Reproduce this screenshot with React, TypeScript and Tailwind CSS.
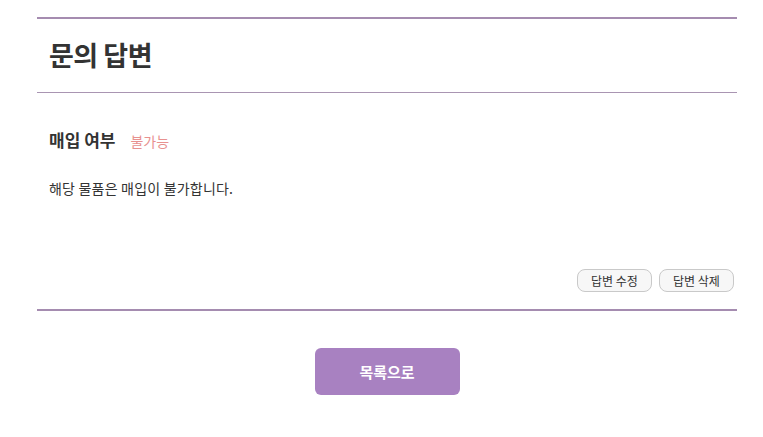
import React from "react";

export default function App() {
  return (
    <div
      className="w-[763px] h-[437px] bg-white pt-[17px]"
      style={{ fontFamily: '"Noto Sans CJK KR", "Noto Sans", sans-serif' }}
    >
      <div className="ml-[37px] w-[700px]">
        <div className="border-t-2 border-[#a58cb0] border-b border-b-[#a995b2] h-[76px] flex items-center px-[12px] pb-[3px]">
          <h1 className="text-[27px] font-bold text-[#333] leading-none tracking-[-0.5px]">문의 답변</h1>
        </div>
        <div className="px-[12px] pt-[38px]">
          <div className="flex items-baseline">
            <span className="text-[17px] font-bold text-[#333] leading-none">매입 여부</span>
            <span className="ml-[15px] text-[14px] text-[#e8918f] leading-none">불가능</span>
          </div>
          <p className="mt-[33px] text-[14px] text-[#333] leading-none tracking-[0.2px]">해당 물품은 매입이 불가합니다.</p>
        </div>
        <div className="flex justify-end gap-[7px] pr-[3px] mt-[74px]">
          <button className="w-[75px] h-[23px] rounded-[8px] border border-[#c9c9c9] bg-[#f7f7f7] text-[12px] text-[#333] leading-none">답변 수정</button>
          <button className="w-[75px] h-[23px] rounded-[8px] border border-[#c9c9c9] bg-[#f7f7f7] text-[12px] text-[#333] leading-none">답변 삭제</button>
        </div>
        <div className="mt-[17px] border-t-2 border-[#a58cb0]" />
        <div className="flex justify-center mt-[37px]">
          <button className="w-[145px] h-[47px] rounded-[6px] bg-[#a881c1] text-white text-[15px] font-bold leading-none">목록으로</button>
        </div>
      </div>
    </div>
  );
}
